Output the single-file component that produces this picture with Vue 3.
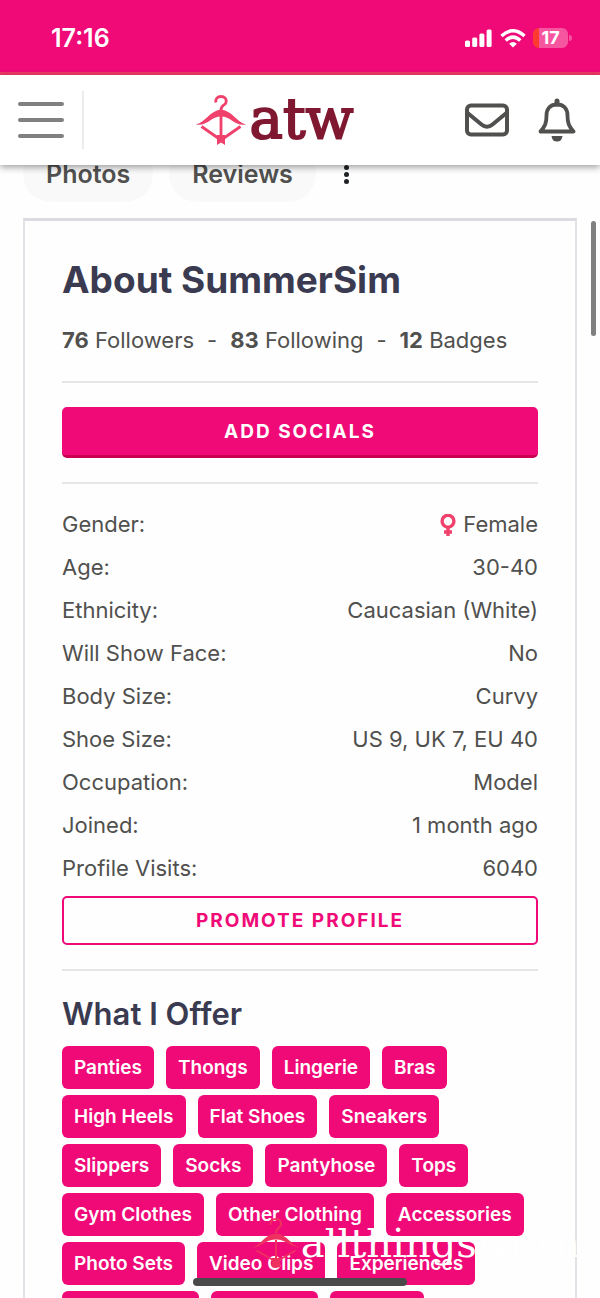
<script setup>
const stats = [
  { count: 76, label: 'Followers' },
  { count: 83, label: 'Following' },
  { count: 12, label: 'Badges' },
]

const details = [
  { label: 'Gender:', value: 'Female', female: true },
  { label: 'Age:', value: '30-40' },
  { label: 'Ethnicity:', value: 'Caucasian (White)' },
  { label: 'Will Show Face:', value: 'No' },
  { label: 'Body Size:', value: 'Curvy' },
  { label: 'Shoe Size:', value: 'US 9, UK 7, EU 40' },
  { label: 'Occupation:', value: 'Model' },
  { label: 'Joined:', value: '1 month ago' },
  { label: 'Profile Visits:', value: '6040' },
]

const offerRows = [
  ['Panties', 'Thongs', 'Lingerie', 'Bras'],
  ['High Heels', 'Flat Shoes', 'Sneakers'],
  ['Slippers', 'Socks', 'Pantyhose', 'Tops'],
  ['Gym Clothes', 'Other Clothing', 'Accessories'],
  ['Photo Sets', 'Video Clips', 'Experiences'],
]

const partialTags = [137, 107, 94]
</script>

<template>
  <div class="screen">
    <div class="status">
      <span class="time">17:16</span>
      <div class="status-icons">
        <svg width="28" height="18" viewBox="0 0 28 18" fill="#fff" aria-hidden="true">
          <rect x="0" y="11.500" width="5" height="6.500" rx="1.500" />
          <rect x="7.200" y="8.500" width="5" height="9.500" rx="1.500" />
          <rect x="14.400" y="4.500" width="5" height="13.500" rx="1.500" />
          <rect x="21.600" y="0.500" width="5" height="17.500" rx="1.500" />
        </svg>
        <svg width="26" height="19" viewBox="0 0 26 19" fill="none" stroke="#fff" stroke-width="3.400" aria-hidden="true">
          <path d="M1.500 7Q13-3.500 24.500 7" />
          <path d="M5.700 11.400Q13 4.800 20.300 11.400" />
          <path d="M13 18.500L9.200 14.700Q13 11.400 16.800 14.700Z" fill="#fff" stroke="none" />
        </svg>
        <div class="battery"><span class="cell">17</span><span class="tip"></span></div>
      </div>
    </div>

    <header class="header">
      <button class="menu" aria-label="Menu"><span></span><span></span><span></span></button>
      <a class="logo" href="#" aria-label="atw home">
        <svg width="50" height="52" viewBox="0 0 50 52" fill="none" stroke="#f0406c" aria-hidden="true">
          <path d="M20 8.500C19 5 21.500 2.500 25 2.500C28.500 2.500 31 5 30 8.500C29.500 11.500 25 10.500 25 16" stroke-width="2.800" />
          <path d="M0 30.500C10 28 13 17 25 15.500C37 17 40 28 50 30.500C39 32.500 35 22.500 25 22.500C15 22.500 11 32.500 0 30.500Z" fill="#f0406c" stroke="none" />
          <path d="M25 22V44M5.500 32.500L22 44M44.500 32.500L28 44" stroke-width="2.800" />
          <path d="M21 41H29V51L25 48.500L21 51Z" fill="#f0406c" stroke="none" />
        </svg>
        <span>atw</span>
      </a>
      <div class="actions">
        <button aria-label="Messages">
          <svg width="44" height="34" viewBox="0 0 44 34" fill="none" stroke="#50504e" stroke-width="4" aria-hidden="true">
            <rect x="2" y="2.500" width="40" height="29" rx="4" />
            <path d="M2 9.500L16.500 21.500Q22 26 27.500 21.500L42 9.500" />
          </svg>
        </button>
        <button aria-label="Notifications">
          <svg width="38" height="44" viewBox="0 0 38 44" fill="none" stroke="#50504e" stroke-width="3.800" stroke-linejoin="round" aria-hidden="true">
            <path d="M2.500 33.500C7 28 8.500 25.500 8.500 17.500C8.500 10.500 12.500 6.500 19 6.500C25.500 6.500 29.500 10.500 29.500 17.500C29.500 25.500 31 28 35.500 33.500Z" />
            <path d="M19 3V6" stroke-width="5" stroke-linecap="round" />
            <path d="M13.500 38H24.500Q24 43.500 19 43.500Q14 43.500 13.500 38Z" fill="#50504e" stroke="none" />
          </svg>
        </button>
      </div>
    </header>

    <main class="content">
      <nav class="tabs">
        <a href="#">Photos</a>
        <a href="#">Reviews</a>
        <button class="more" aria-label="More"><i></i><i></i><i></i></button>
      </nav>

      <section class="card">
        <h1>About SummerSim</h1>
        <p class="stats">
          <template v-for="(s, i) in stats" :key="s.label">
            <span v-if="i">-</span><span><b>{{ s.count }}</b> {{ s.label }}</span>
          </template>
        </p>
        <hr />
        <button class="btn solid">ADD SOCIALS</button>
        <hr />
        <dl>
          <div v-for="d in details" :key="d.label" class="row">
            <dt>{{ d.label }}</dt>
            <dd>
              <svg v-if="d.female" width="16" height="22" viewBox="0 0 16 22" fill="none" stroke="#f0406c" stroke-width="3.400" aria-hidden="true">
                <circle cx="8" cy="7.200" r="5.900" />
                <path d="M8 13V22M4 18H12" />
              </svg>{{ d.value }}
            </dd>
          </div>
        </dl>
        <button class="btn outline">PROMOTE PROFILE</button>
        <hr />
        <h2>What I Offer</h2>
        <div class="offers">
          <ul v-for="(row, r) in offerRows" :key="r">
            <li v-for="tag in row" :key="tag"><a href="#">{{ tag }}</a></li>
          </ul>
          <div class="partial">
            <span v-for="w in partialTags" :key="w" :style="{ width: w + 'px' }"></span>
          </div>
        </div>
      </section>
    </main>

    <div class="scrollbar"></div>
    <div class="watermark">
      <svg width="50" height="52" viewBox="0 0 50 52" fill="none" stroke="#ef3160" aria-hidden="true">
        <path d="M19.500 8C19 4.500 21.500 2 25 2C28.500 2 30.500 4.500 30 7.500C29.500 11 25 11 25 16" stroke-width="2" />
        <path d="M0 31C10 29 13 17.500 25 16.500C37 17.500 40 29 50 31C38 30 36 22.500 25 22.500C14 22.500 12 30 0 31Z" fill="#ef3160" stroke="none" />
        <path d="M25 23V44M5.500 33.500L22 43M44.500 33.500L28 43" stroke-width="2" />
        <path d="M21 41H29V50L25 51L21 50Z" fill="#ef3160" stroke="none" />
      </svg>
      <span>allthingsworn</span>
    </div>
    <div class="home-bar"></div>
  </div>
</template>

<style>
body {
  margin: 0;
  background: #fefefe;
}
</style>

<style scoped>
* {
  box-sizing: border-box;
}
.screen {
  position: relative;
  height: 100vh;
  overflow: hidden;
  display: flex;
  flex-direction: column;
  background: #fefefe;
  color: #50504e;
  font-family: Inter, "Liberation Sans", sans-serif;
  font-size: 22px;
}
button {
  font: inherit;
  color: inherit;
  border: 0;
  padding: 0;
  background: none;
}
a {
  color: inherit;
  text-decoration: none;
}
svg {
  display: block;
}
.status {
  flex: none;
  display: flex;
  justify-content: space-between;
  align-items: center;
  height: 75px;
  padding: 0 28px 0 51px;
  border-bottom: 3px solid #f03a66;
  background: #ef0a78;
  color: #fff;
}
.time {
  font-size: 25px;
  font-weight: 600;
  padding-top: 4px;
}
.status-icons {
  display: flex;
  align-items: center;
  gap: 7px;
  padding-top: 4px;
}
.battery {
  display: flex;
  align-items: center;
  gap: 1px;
}
.cell {
  width: 35px;
  height: 20px;
  border-radius: 6px;
  background: linear-gradient(90deg, #ff3b30 6px, #f655a0 6px);
  font-size: 18px;
  line-height: 20px;
  font-weight: 700;
  text-align: center;
}
.tip {
  width: 3px;
  height: 6px;
  border-radius: 0 3px 3px 0;
  background: #f655a0;
}
.header {
  flex: none;
  position: relative;
  z-index: 2;
  display: flex;
  justify-content: space-between;
  align-items: center;
  height: 90px;
  padding: 0 24px 0 18px;
  background: #fff;
  box-shadow: 0 2px 7px rgba(0, 0, 0, 0.4);
}
.menu {
  display: flex;
  flex-direction: column;
  justify-content: center;
  gap: 12px;
  width: 66px;
  height: 58px;
  padding-right: 18px;
  border-right: 2px solid #ececec;
}
.menu span {
  height: 4px;
  border-radius: 2px;
  background: #808080;
}
.logo {
  display: flex;
  align-items: center;
  gap: 4px;
  color: #7f1830;
}
.logo span {
  font-family: "DejaVu Serif", serif;
  font-size: 56px;
  line-height: 56px;
  padding-bottom: 3px;
  -webkit-text-stroke: 2px #7f1830;
}
.actions {
  display: flex;
  justify-content: flex-end;
  align-items: center;
  gap: 29px;
}
.content {
  flex: 1;
  min-height: 0;
  padding: 0 23px;
}
.tabs {
  display: flex;
  align-items: center;
  gap: 16px;
  margin: -19px 0 16px;
}
.tabs a {
  padding: 0 23px;
  border-radius: 28px;
  background: #f9f9f9;
  font-size: 25px;
  line-height: 56px;
  font-weight: 600;
}
.more {
  display: flex;
  flex-direction: column;
  align-items: center;
  gap: 2px;
  width: 30px;
}
.more i {
  width: 5px;
  height: 5px;
  border-radius: 50%;
  background: #202326;
}
.card {
  padding: 35px 37px 0;
  border: 2px solid #e2e3e8;
  border-top: 3px solid #dcdce0;
}
h1 {
  margin: 0;
  color: #3a3a50;
  font-size: 37px;
  line-height: 48px;
  font-weight: 700;
}
.stats {
  display: flex;
  gap: 13px;
  margin: 20px 0 25px;
  line-height: 32px;
}
hr {
  height: 2px;
  margin: 0;
  border: 0;
  background: #e6e6e8;
}
.btn {
  display: block;
  width: 100%;
  height: 51px;
  border-radius: 5px;
  font-size: 19px;
  font-weight: 700;
  letter-spacing: 2px;
}
.solid {
  margin: 24px 0;
  background: #ef0a78;
  border-bottom: 3px solid #cc0050;
  color: #fff;
}
.outline {
  height: 49px;
  margin: 6px 0 24px;
  border: 2px solid #ef0a78;
  color: #ef0a78;
}
dl {
  margin: 19px 0 0;
}
.row {
  display: flex;
  justify-content: space-between;
  line-height: 43px;
}
dd {
  display: flex;
  align-items: center;
  gap: 7px;
  margin: 0;
}
h2 {
  margin: 23px 0 12px;
  color: #3a3a50;
  font-size: 31px;
  line-height: 40px;
  font-weight: 600;
}
.offers,
ul,
.partial {
  display: flex;
  margin: 0;
  padding: 0;
}
.offers {
  flex-direction: column;
  gap: 6px;
}
ul,
.partial {
  gap: 12px;
  list-style: none;
}
li a,
.partial span {
  display: block;
  height: 43px;
  padding: 0 12px;
  border-radius: 6px;
  background: #ef0a78;
  color: #fff;
  font-size: 19px;
  line-height: 43px;
  font-weight: 600;
}
.scrollbar {
  position: absolute;
  top: 221px;
  right: 4px;
  width: 5px;
  height: 115px;
  border-radius: 3px;
  background: #808080;
}
.watermark {
  position: absolute;
  right: 20px;
  bottom: 29px;
  display: flex;
  align-items: center;
  color: #fff;
  font-family: "DejaVu Serif", serif;
  font-size: 40px;
  line-height: 52px;
}
.home-bar {
  position: absolute;
  left: 193px;
  right: 193px;
  bottom: 12px;
  height: 8px;
  border-radius: 4px;
  background: #4a4a4a;
}
</style>
